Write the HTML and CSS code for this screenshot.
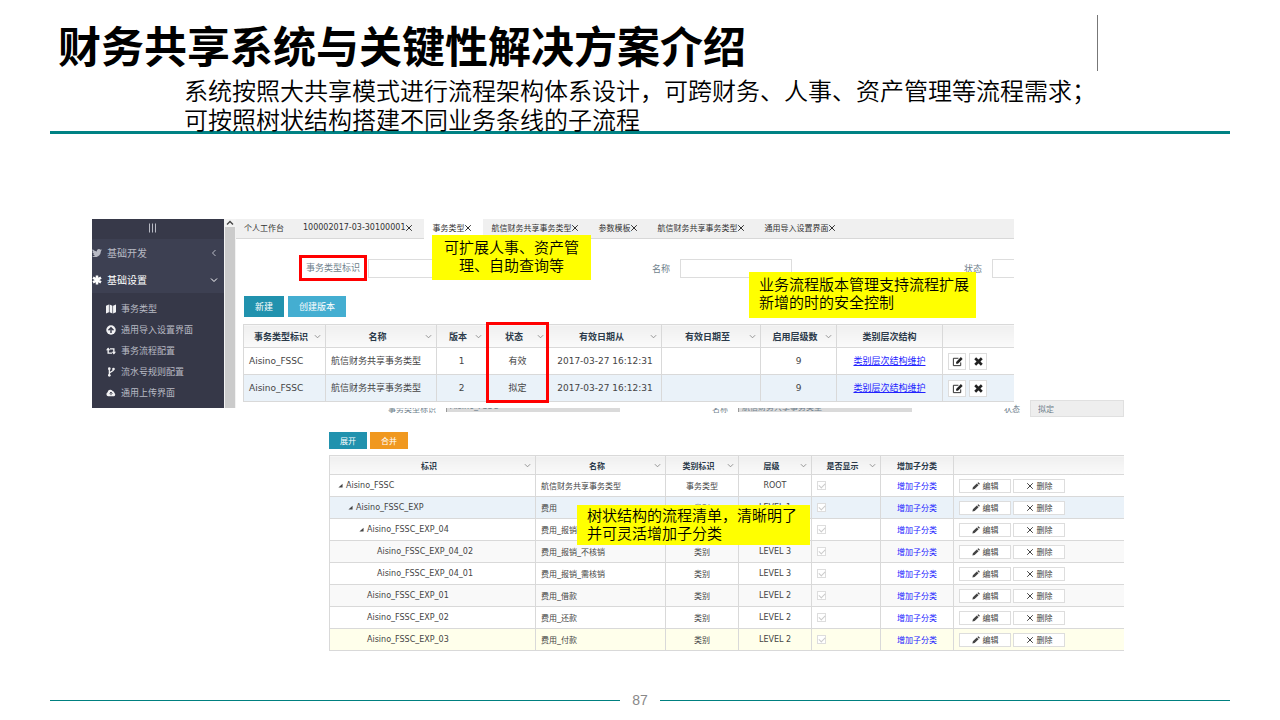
FILE: index.html
```
<!DOCTYPE html>
<html lang="zh-CN">
<head>
  <meta charset="UTF-8" />
  <meta name="viewport" content="width=device-width, initial-scale=1.0"/>
  <title>财务共享系统与关键性解决方案介绍</title>
  <link rel="stylesheet" href="styles.css">
</head>
<body>

  <svg class="sprite" aria-hidden="true">
    <symbol id="down" viewBox="0 0 8 8"><path d="M1 2.5l3 3 3-3" fill="none" stroke="currentColor"/></symbol>
    <symbol id="left" viewBox="0 0 8 8"><path d="M5.5 1l-3 3 3 3" fill="none" stroke="currentColor"/></symbol>
    <symbol id="up" viewBox="0 0 8 8"><path d="M1 5.5l3-3 3 3" fill="none" stroke="currentColor" stroke-width="1.4"/></symbol>
    <symbol id="bars" viewBox="0 0 10 10"><path d="M1.5 0.5v9M4.500 0.5v9M7.500 0.5v9" stroke="currentColor"/></symbol>
    <symbol id="close" viewBox="0 0 8 8"><path d="M1.2 1.2l5.6 5.6M6.8 1.2l-5.6 5.6" stroke="currentColor"/></symbol>
    <symbol id="cross" viewBox="0 0 10 10"><path d="M2 2l6 6M8 2l-6 6" stroke="currentColor" stroke-width="2.4"/></symbol>
    <symbol id="bird" viewBox="0 0 24 24"><path fill="currentColor" d="M24 4.6a10 10 0 0 1-2.8.8 5 5 0 0 0 2.1-2.7 10 10 0 0 1-3.1 1.2 4.9 4.9 0 0 0-8.4 4.5A14 14 0 0 1 1.700 3.200a4.900 4.900 0 0 0 1.500 6.500 5 5 0 0 1-2.200-.6 4.900 4.900 0 0 0 3.900 4.900 5 5 0 0 1-2.200.1 4.900 4.900 0 0 0 4.600 3.400A10 10 0 0 1 0 19.500a14 14 0 0 0 21.500-12.400A10 10 0 0 0 24 4.600z"/></symbol>
    <symbol id="star" viewBox="0 0 12 12"><path d="M6 0.500v11M1.200 3.200l9.600 5.600M10.800 3.200L1.200 8.800" stroke="currentColor" stroke-width="3"/></symbol>
    <symbol id="map" viewBox="0 0 12 12"><path fill="currentColor" d="M0 2.200L3.500 0.500v9.300L0 11.500zM4.300 0.500l3.400 1.700v9.300L4.300 9.800zM8.500 2.200L12 0.500v9.300l-3.500 1.700z"/></symbol>
    <symbol id="circle-up" viewBox="0 0 12 12"><circle cx="6" cy="6" r="5.700" fill="currentColor"/><path d="M6 9.500V3.500M3 6.200l3-3 3 3" fill="none" stroke="#363848" stroke-width="1.700"/></symbol>
    <symbol id="loop" viewBox="0 0 14 12"><path d="M3 2.500v6.500h5.500M11 9.500V3H5.500" fill="none" stroke="currentColor" stroke-width="1.900"/><path fill="currentColor" d="M0 5l3-4 3 4zM8 7h6l-3 4z"/></symbol>
    <symbol id="fork" viewBox="0 0 12 12"><path d="M4 2v8M9 3c0 3-5 2-5 5" fill="none" stroke="currentColor" stroke-width="1.500"/><circle cx="4" cy="2" r="1.600" fill="currentColor"/><circle cx="9" cy="2.500" r="1.600" fill="currentColor"/><circle cx="4" cy="10" r="1.600" fill="currentColor"/></symbol>
    <symbol id="cloud" viewBox="0 0 14 12"><path fill="currentColor" d="M3 10.500a3 3 0 0 1-.8-5.600A4 4 0 0 1 9.700 3.500a2.400 2.400 0 0 1 2 2.600 2.400 2.400 0 0 1-.5 4.400z"/><path d="M7 9V5M5 6.800l2-2 2 2" fill="none" stroke="#363848" stroke-width="1.300"/></symbol>
    <symbol id="edit" viewBox="0 0 12 12"><path d="M9.500 7v3.500H1.500v-8H7" fill="none" stroke="currentColor"/><path fill="currentColor" d="M4.500 8.500V6.500L9.700 1.200 11.600 3.200 6.500 8.500z"/></symbol>
    <symbol id="pencil" viewBox="0 0 10 10"><path fill="currentColor" d="M0.500 9.500l.6-2.900L6 1.900l2.200 2.100-4.900 4.900zM6.700 1.300L8 0.300l1.900 1.800L8.800 3.300z"/></symbol>
    <symbol id="node" viewBox="0 0 6 6"><path fill="currentColor" d="M5.500 1v4.500H0.500z"/></symbol>
  </svg>

  <header class="header">
    <div class="title-row">
      <h1>财务共享系统与关键性解决方案介绍</h1>
      <span class="rule"></span>
    </div>
    <p class="intro">系统按照大共享模式进行流程架构体系设计，可跨财务、人事、资产管理等流程需求；<br>可按照树状结构搭建不同业务条线的子流程</p>
  </header>

  <main class="board">

    <section class="shot shot-list">
      <nav class="sidebar">
        <div class="side-top"><svg class="icon"><use href="#bars"/></svg></div>
        <a class="group" href="#"><svg class="icon"><use href="#bird"/></svg><span>基础开发</span><svg class="arrow"><use href="#left"/></svg></a>
        <a class="group open" href="#"><svg class="icon"><use href="#star"/></svg><span>基础设置</span><svg class="arrow"><use href="#down"/></svg></a>
        <div class="submenu">
          <a href="#"><svg class="icon"><use href="#map"/></svg>事务类型</a>
          <a href="#"><svg class="icon"><use href="#circle-up"/></svg>通用导入设置界面</a>
          <a href="#"><svg class="icon"><use href="#loop"/></svg>事务流程配置</a>
          <a href="#"><svg class="icon"><use href="#fork"/></svg>流水号规则配置</a>
          <a href="#"><svg class="icon"><use href="#cloud"/></svg>通用上传界面</a>
        </div>
      </nav>
      <div class="scrollbar"><svg class="arrow"><use href="#up"/></svg><div class="thumb"></div></div>

      <div class="workspace">
        <div class="tabs">
          <div class="tab"><a href="#">个人工作台</a></div>
          <div class="tab"><a href="#">100002017-03-30100001</a><button aria-label="关闭"><svg><use href="#close"/></svg></button></div>
          <div class="tab active"><a href="#">事务类型</a><button aria-label="关闭"><svg><use href="#close"/></svg></button></div>
          <div class="tab"><a href="#">航信财务共享事务类型</a><button aria-label="关闭"><svg><use href="#close"/></svg></button></div>
          <div class="tab"><a href="#">参数模板</a><button aria-label="关闭"><svg><use href="#close"/></svg></button></div>
          <div class="tab"><a href="#">航信财务共享事务类型</a><button aria-label="关闭"><svg><use href="#close"/></svg></button></div>
          <div class="tab"><a href="#">通用导入设置界面</a><button aria-label="关闭"><svg><use href="#close"/></svg></button></div>
        </div>

        <form class="search">
          <div class="field"><label class="marked" for="q-id">事务类型标识</label><input id="q-id" type="text"></div>
          <div class="field"><label for="q-name">名称</label><input id="q-name" type="text"></div>
          <div class="field"><label for="q-state">状态</label><input id="q-state" type="text"></div>
        </form>

        <div class="actions">
          <button class="btn teal">新建</button>
          <button class="btn sky">创建版本</button>
        </div>

        <table class="grid types">
          <colgroup><col class="c82"><col class="c111"><col class="c50"><col class="c62"><col class="c113"><col class="c99"><col class="c76"><col class="c106"><col></colgroup>
          <thead>
            <tr>
              <th><div class="th"><span>事务类型标识</span><svg><use href="#down"/></svg></div></th>
              <th><div class="th"><span>名称</span><svg><use href="#down"/></svg></div></th>
              <th><div class="th"><span>版本</span><svg><use href="#down"/></svg></div></th>
              <th><div class="th"><span>状态</span><svg><use href="#down"/></svg></div></th>
              <th><div class="th"><span>有效日期从</span><svg><use href="#down"/></svg></div></th>
              <th><div class="th"><span>有效日期至</span><svg><use href="#down"/></svg></div></th>
              <th><div class="th"><span>启用层级数</span><svg><use href="#down"/></svg></div></th>
              <th>类别层次结构</th>
              <th></th>
            </tr>
          </thead>
          <tbody>
            <tr>
              <td class="text">Aisino_FSSC</td><td class="text">航信财务共享事务类型</td><td>1</td><td>有效</td><td>2017-03-27 16:12:31</td><td></td><td>9</td>
              <td><a class="link" href="#">类别层次结构维护</a></td>
              <td><div class="tools"><button aria-label="编辑"><svg><use href="#edit"/></svg></button><button aria-label="删除"><svg><use href="#cross"/></svg></button></div></td>
            </tr>
            <tr class="blue">
              <td class="text">Aisino_FSSC</td><td class="text">航信财务共享事务类型</td><td>2</td><td>拟定</td><td>2017-03-27 16:12:31</td><td></td><td>9</td>
              <td><a class="link" href="#">类别层次结构维护</a></td>
              <td><div class="tools"><button aria-label="编辑"><svg><use href="#edit"/></svg></button><button aria-label="删除"><svg><use href="#cross"/></svg></button></div></td>
            </tr>
          </tbody>
        </table>
      </div>

      <div class="mark-state"></div>
      <p class="note note-query">可扩展人事、资产管理、自助查询等</p>
      <p class="note note-version">业务流程版本管理支持流程扩展新增的时的安全控制</p>
    </section>

    <section class="shot-tree">
      <form class="detail">
        <div class="field"><label for="d-id">事务类型标识</label><input id="d-id" type="text" value="Aisino_FSSC" readonly></div>
        <div class="field"><label for="d-name">名称</label><input id="d-name" type="text" value="航信财务共享事务类型" readonly></div>
        <div class="field state"><label for="d-state">状态</label><input id="d-state" type="text" value="拟定" readonly></div>
      </form>

      <div class="actions">
        <button class="btn teal">展开</button>
        <button class="btn orange">合并</button>
      </div>

      <table class="grid tree">
        <colgroup><col class="c206"><col class="c130"><col class="c73"><col class="c73"><col class="c69"><col class="c73"><col></colgroup>
        <thead>
          <tr>
            <th><div class="th"><span>标识</span><svg><use href="#down"/></svg></div></th>
            <th><div class="th"><span>名称</span><svg><use href="#down"/></svg></div></th>
            <th><div class="th"><span>类别标识</span><svg><use href="#down"/></svg></div></th>
            <th><div class="th"><span>层级</span><svg><use href="#down"/></svg></div></th>
            <th><div class="th"><span>是否显示</span><svg><use href="#down"/></svg></div></th>
            <th>增加子分类</th>
            <th></th>
          </tr>
        </thead>
        <tbody>
          <tr>
            <td class="text lv0"><svg class="node"><use href="#node"/></svg>Aisino_FSSC</td><td class="text">航信财务共享事务类型</td><td>事务类型</td><td>ROOT</td>
            <td class="text"><input type="checkbox" aria-label="是否显示" checked disabled></td><td><a class="add" href="#">增加子分类</a></td>
            <td><div class="tools"><button><svg><use href="#pencil"/></svg>编辑</button><button><svg><use href="#close"/></svg>删除</button></div></td>
          </tr>
          <tr class="blue">
            <td class="text lv1"><svg class="node"><use href="#node"/></svg>Aisino_FSSC_EXP</td><td class="text">费用</td><td>类别</td><td>LEVEL 1</td>
            <td class="text"><input type="checkbox" aria-label="是否显示" checked disabled></td><td><a class="add" href="#">增加子分类</a></td>
            <td><div class="tools"><button><svg><use href="#pencil"/></svg>编辑</button><button><svg><use href="#close"/></svg>删除</button></div></td>
          </tr>
          <tr>
            <td class="text lv2"><svg class="node"><use href="#node"/></svg>Aisino_FSSC_EXP_04</td><td class="text">费用_报销</td><td>类别</td><td>LEVEL 2</td>
            <td class="text"><input type="checkbox" aria-label="是否显示" checked disabled></td><td><a class="add" href="#">增加子分类</a></td>
            <td><div class="tools"><button><svg><use href="#pencil"/></svg>编辑</button><button><svg><use href="#close"/></svg>删除</button></div></td>
          </tr>
          <tr class="grey">
            <td class="text leaf3">Aisino_FSSC_EXP_04_02</td><td class="text">费用_报销_不核销</td><td>类别</td><td>LEVEL 3</td>
            <td class="text"><input type="checkbox" aria-label="是否显示" checked disabled></td><td><a class="add" href="#">增加子分类</a></td>
            <td><div class="tools"><button><svg><use href="#pencil"/></svg>编辑</button><button><svg><use href="#close"/></svg>删除</button></div></td>
          </tr>
          <tr>
            <td class="text leaf3">Aisino_FSSC_EXP_04_01</td><td class="text">费用_报销_需核销</td><td>类别</td><td>LEVEL 3</td>
            <td class="text"><input type="checkbox" aria-label="是否显示" checked disabled></td><td><a class="add" href="#">增加子分类</a></td>
            <td><div class="tools"><button><svg><use href="#pencil"/></svg>编辑</button><button><svg><use href="#close"/></svg>删除</button></div></td>
          </tr>
          <tr class="grey">
            <td class="text leaf2">Aisino_FSSC_EXP_01</td><td class="text">费用_借款</td><td>类别</td><td>LEVEL 2</td>
            <td class="text"><input type="checkbox" aria-label="是否显示" checked disabled></td><td><a class="add" href="#">增加子分类</a></td>
            <td><div class="tools"><button><svg><use href="#pencil"/></svg>编辑</button><button><svg><use href="#close"/></svg>删除</button></div></td>
          </tr>
          <tr>
            <td class="text leaf2">Aisino_FSSC_EXP_02</td><td class="text">费用_还款</td><td>类别</td><td>LEVEL 2</td>
            <td class="text"><input type="checkbox" aria-label="是否显示" checked disabled></td><td><a class="add" href="#">增加子分类</a></td>
            <td><div class="tools"><button><svg><use href="#pencil"/></svg>编辑</button><button><svg><use href="#close"/></svg>删除</button></div></td>
          </tr>
          <tr class="yellow">
            <td class="text leaf2">Aisino_FSSC_EXP_03</td><td class="text">费用_付款</td><td>类别</td><td>LEVEL 2</td>
            <td class="text"><input type="checkbox" aria-label="是否显示" checked disabled></td><td><a class="add" href="#">增加子分类</a></td>
            <td><div class="tools"><button><svg><use href="#pencil"/></svg>编辑</button><button><svg><use href="#close"/></svg>删除</button></div></td>
          </tr>
        </tbody>
      </table>

      <p class="note note-tree">树状结构的流程清单，清晰明了并可灵活增加子分类</p>
    </section>

  </main>

  <footer class="footer"><span class="line"></span><span class="page">87</span><span class="line"></span></footer>

</body>
</html>
```

FILE: styles.css
```
* {
  box-sizing: border-box;
}
body {
  margin: 0;
  min-height: 100vh;
  display: flex;
  flex-direction: column;
  padding: 0 50px;
  background: #fff;
  color: #000;
  font-family: "DejaVu Sans", "Noto Sans CJK SC", sans-serif;
}
a {
  color: inherit;
  text-decoration: none;
}
button, input {
  font: inherit;
  color: inherit;
  margin: 0;
  padding: 0;
}
.sprite {
  position: absolute;
  width: 0;
  height: 0;
}

/* slide header */
.header {
  height: 134px;
  border-bottom: 3px solid #008284;
  font-family: "Noto Sans CJK SC", sans-serif;
}
.title-row {
  display: flex;
  justify-content: space-between;
  height: 75px;
  padding: 15px 132px 0 8px;
}
h1 {
  margin: 0;
  font-size: 43px;
  line-height: 58px;
  font-weight: 700;
}
.rule {
  width: 1px;
  height: 56px;
  background: #777;
}
.intro {
  margin: 0;
  padding-left: 134px;
  font-size: 24px;
  line-height: 29px;
  font-weight: 350;
}

/* board with the two screens */
.board {
  padding: 85px 106px 0 42px;
}
.shot {
  position: relative;
  z-index: 1;
  display: flex;
  height: 189px;
  margin: 0 110px -8px 0;
  background: #fff;
  font-size: 9px;
}
.sidebar {
  width: 132px;
  flex: none;
  overflow: hidden;
  background: #363848;
  color: #b8bac4;
}
.sidebar a {
  display: flex;
  align-items: center;
}
.sidebar .icon {
  width: 10px;
  height: 10px;
}
.side-top {
  display: flex;
  justify-content: center;
  height: 20px;
  padding: 4px 10px 0 0;
  background: #373949;
}
.arrow {
  width: 8px;
  height: 8px;
}
.group {
  height: 27px;
  gap: 5px;
  padding-right: 6px;
  background: #3d4052;
  font-size: 10px;
}
.group span {
  flex: 1;
}
.group.open {
  color: #fff;
}
.submenu {
  padding: 5px 0 0 14px;
}
.submenu a {
  height: 21px;
  gap: 5px;
}
.submenu .icon {
  color: #f2f2f4;
}
.scrollbar {
  width: 12px;
  flex: none;
  display: flex;
  flex-direction: column;
  align-items: center;
  background: #f2f2f2;
  color: #444;
}
.thumb {
  width: 10px;
  flex: 1;
  background: #cbcbcb;
}
.workspace {
  flex: 1;
  min-width: 0;
  overflow: hidden;
}
.tabs {
  display: flex;
  height: 20px;
  background: #f0f0f0;
  border-bottom: 1px solid #d8d8d8;
  color: #333;
  font-size: 8px;
}
.tab {
  display: flex;
  align-items: center;
  flex: none;
  padding: 0 11px 2px 8px;
  height: 19px;
  white-space: nowrap;
}
.tab.active {
  height: 20px;
  padding-bottom: 3px;
  background: #fff;
}
.tab button {
  border: 0;
  background: none;
  width: 8px;
  height: 8px;
  line-height: 0;
}
.tab svg {
  width: 8px;
  height: 8px;
}
.search {
  display: grid;
  grid-template-columns: 244px 312px 312px;
  padding-top: 16px;
  height: 42px;
  color: #6f7f8c;
}
.field {
  display: flex;
  align-items: center;
  justify-content: flex-end;
  gap: 10px;
}
.search .field {
  height: 26px;
}
.search input {
  width: 112px;
  height: 19px;
  border: 1px solid #ddd;
  background: #fff;
}
.search .marked {
  border: 3px solid #f00;
  padding: 0 4px;
  height: 26px;
  line-height: 20px;
  margin-right: -9px;
}
.actions {
  display: flex;
  gap: 4px;
}
.workspace .actions {
  padding: 15px 0 7px 8px;
}
.btn {
  border: 0;
  color: #fff;
  height: 21px;
  padding: 0 11px;
}
.teal {
  background: #2192ae;
}
.sky {
  background: #44aed1;
}
.orange {
  background: #f0981f;
}

/* tables */
.grid {
  width: 100%;
  table-layout: fixed;
  border-collapse: collapse;
  color: #444;
}
.grid th, .grid td {
  border: 1px solid #d9d9d9;
  border-right: 0;
  padding: 0;
  text-align: center;
  white-space: nowrap;
}
.grid th {
  background: linear-gradient(#efefef, #fafafa);
  color: #2b3a4a;
}
.grid .text {
  text-align: left;
  padding-left: 5px;
}
.th {
  display: flex;
  align-items: center;
  padding: 0 4px;
}
.th span {
  flex: 1;
}
.th svg {
  width: 7px;
  height: 7px;
  color: #888;
}
.blue {
  background: #eaf2f9;
}
.grey {
  background: #f9f9f9;
}
.yellow {
  background: #ffffeb;
}
.types {
  width: calc(100% - 7px);
  margin-left: 7px;
}
.types th {
  height: 23px;
}
.types td {
  height: 27px;
}
.types tbody {
  line-height: 11px;
}
.link {
  color: #22f;
  text-decoration: underline;
}
.tools {
  display: flex;
  gap: 3px;
  padding-left: 5px;
}
.tools button {
  display: flex;
  align-items: center;
  justify-content: center;
  width: 18px;
  height: 17px;
  border: 1px solid #ddd;
  background: #fff;
  color: #222;
}
.tools svg {
  width: 11px;
  height: 11px;
}
.c82 { width: 82px; }
.c111 { width: 111px; }
.c50 { width: 50px; }
.c62 { width: 62px; }
.c113 { width: 113px; }
.c99 { width: 99px; }
.c76 { width: 76px; }
.c106 { width: 106px; }
.c206 { width: 206px; }
.c130 { width: 130px; }
.c73 { width: 73px; }
.c69 { width: 69px; }

/* tree screen */
.shot-tree {
  position: relative;
  margin-left: 237px;
  font-size: 8px;
}
.detail {
  display: grid;
  grid-template-columns: 291px 292px 212px;
  height: 32px;
  overflow: hidden;
  color: #6f7f8c;
}
.detail .field {
  height: 17px;
}
.detail input {
  width: 174px;
  height: 12px;
  border: 0;
  border-left: 1px solid #999;
  padding-left: 3px;
  background: #dadada;
  align-self: flex-start;
}
.detail .state input {
  width: 94px;
  height: 17px;
  border: 1px solid #e0e0e0;
  padding-left: 7px;
  background: #eee;
}
.shot-tree .btn {
  height: 17px;
  width: 38px;
}
.shot-tree .actions {
  gap: 3px;
  padding-bottom: 6px;
}
.tree th {
  height: 19px;
}
.tree td {
  height: 22px;
}
.tree .lv0 { padding-left: 8px; }
.tree .lv1 { padding-left: 18px; }
.tree .lv2 { padding-left: 29px; }
.tree .leaf2 { padding-left: 37px; }
.tree .leaf3 { padding-left: 47px; }
.node {
  width: 5px;
  height: 5px;
  margin-right: 3px;
}
.tree .tools button {
  width: 52px;
  height: 14px;
  gap: 3px;
  color: #444;
}
.tree .tools {
  gap: 2px;
}
.tree .tools svg {
  width: 8px;
  height: 8px;
}
.add {
  color: #22f;
}
.tree input {
  appearance: none;
  display: block;
  width: 9px;
  height: 9px;
  border: 1px solid #ddd;
  background: #fff;
}
.tree input::after {
  content: "";
  display: block;
  width: 5px;
  height: 3px;
  margin: 1px;
  border: solid #ccc;
  border-width: 0 0 1px 1px;
  transform: rotate(-45deg);
}

/* overlays */
.mark-state {
  position: absolute;
  left: 394px;
  top: 103px;
  width: 63px;
  height: 81px;
  border: 3px solid #f00;
}
.note {
  position: absolute;
  margin: 0;
  padding: 3px 5px 0 10px;
  background: #ff0;
  color: #000;
  font: 350 15px/18px "Noto Sans CJK SC", sans-serif;
}
.note-query {
  left: 340px;
  top: 16px;
  width: 159px;
  height: 45px;
  padding: 3px 10px;
  text-align: center;
}
.note-version {
  left: 657px;
  top: 53px;
  width: 227px;
  height: 46px;
}
.note-tree {
  left: 248px;
  top: 105px;
  width: 233px;
  height: 40px;
  padding-top: 1px;
}

/* footer */
.footer {
  display: flex;
  align-items: center;
  margin-top: auto;
  padding-bottom: 11px;
  color: #888;
  font: 14px/18px "Liberation Sans", sans-serif;
}
.line {
  flex: 1;
  height: 1px;
  background: #008080;
}
.page {
  width: 40px;
  text-align: center;
}
```
